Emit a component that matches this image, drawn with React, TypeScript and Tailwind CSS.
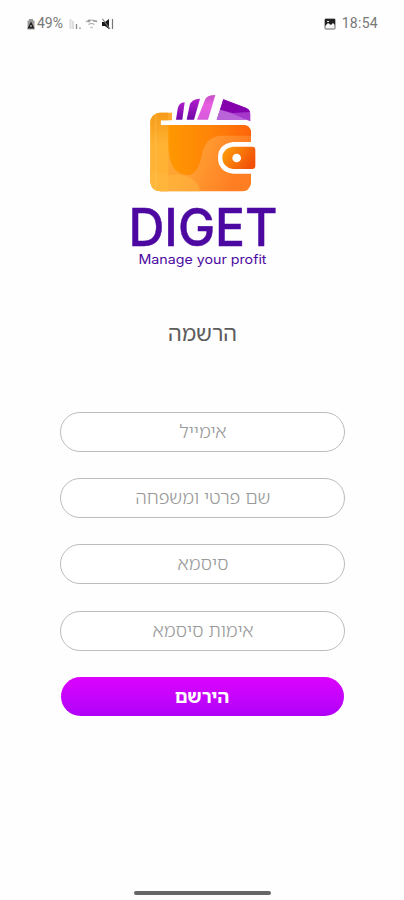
const fields = [
  { name: "email", type: "email", label: "אימייל" },
  { name: "fullName", type: "text", label: "שם פרטי ומשפחה" },
  { name: "password", type: "password", label: "סיסמא" },
  { name: "confirmPassword", type: "password", label: "אימות סיסמא" },
];

function StatusBar() {
  return (
    <header className="flex h-[47px] items-center justify-between px-[26px] font-[Roboto,sans-serif] text-[14px] text-[#777]">
      <div className="flex items-center">
        <svg className="h-3 w-[10px]" viewBox="0 0 10 12">
          <path d="M3 1h4v1.500h1.500V11.500H1.500V2.500H3z" fill="#999" />
          <path d="M5 3.500L8.500 10.500H1.500z" fill="#222" />
          <path d="M4 8h2" stroke="#ddd" strokeWidth="1" />
        </svg>
        <span className="ml-px w-[27px] whitespace-nowrap">49%</span>
        <svg className="ml-[5px] h-3 w-[13px]" viewBox="0 0 13 12">
          <path d="M1.500 1v10M4 3v8" stroke="#ddd" strokeWidth="2" />
          <path d="M7.500 6v5M11 9.500V11" stroke="#888" strokeWidth="1.300" />
        </svg>
        <svg className="ml-[3px] h-3 w-[13px]" viewBox="0 0 13 12" fill="none">
          <path d="M1 4q5-4 11 0M3.500 6.500q3-2 6 0" stroke="#aaa" strokeWidth="1.200" />
          <path d="M4 1.500v3M2.500 3h3M8 3h4" stroke="#888" strokeWidth="1" />
          <path d="M5 9.500h3" stroke="#ccc" strokeWidth="1.500" />
        </svg>
        <svg className="ml-[3px] h-3 w-[13px]" viewBox="0 0 13 12">
          <path d="M1 4h3l4-3v10L4 8H1z" fill="#1a1a1a" />
          <path d="M1.500 1l7.500 10M11.500 1v10" stroke="#777" strokeWidth="1.200" />
        </svg>
      </div>
      <div className="flex items-center">
        <svg className="mr-[6px] h-3 w-3" viewBox="0 0 12 12">
          <rect x="1" y="1" width="10" height="10" rx=".5" fill="#f4f4f4" stroke="#666" />
          <path d="M1 1h10v6L9 5 7 7 4 5 1 8z" fill="#222" />
          <path d="M3 3.500h2" stroke="#eee" />
        </svg>
        <span className="tracking-[0.3px]">18:54</span>
      </div>
    </header>
  );
}

function Wallet() {
  return (
    <svg className="ml-1.5 h-[115px] w-[130px]" viewBox="0 0 390 345">
      <defs>
        <linearGradient id="body" x1="0" y1="0" x2="1" y2=".3">
          <stop offset="0" stopColor="#ffae2c" />
          <stop offset=".5" stopColor="#ffa234" />
          <stop offset="1" stopColor="#ff7e22" />
        </linearGradient>
        <linearGradient id="pocket" x1="0" y1="0" x2="1" y2="0">
          <stop offset="0" stopColor="#ff9800" />
          <stop offset=".5" stopColor="#ff8408" />
          <stop offset="1" stopColor="#ff640a" />
        </linearGradient>
        <linearGradient id="base" x1="0" y1="0" x2="1" y2="0">
          <stop offset="0" stopColor="#ffb93c" />
          <stop offset="1" stopColor="#ffac3c" />
        </linearGradient>
        <linearGradient id="edge" x1="0" y1="0" x2="0" y2="1">
          <stop offset="0" stopColor="#f59a18" />
          <stop offset=".4" stopColor="#ffb232" />
          <stop offset="1" stopColor="#ffb236" />
        </linearGradient>
        <linearGradient id="clasp" x1="0" y1="0" x2="1" y2=".5">
          <stop offset="0" stopColor="#ffa50a" />
          <stop offset="1" stopColor="#f25208" />
        </linearGradient>
        <linearGradient id="note" x1="0" y1="0" x2="0" y2="1">
          <stop offset="0" stopColor="#b21ccb" />
          <stop offset="1" stopColor="#7108a8" />
        </linearGradient>
        <linearGradient id="pinkNote" x1="0" y1="0" x2="0" y2="1">
          <stop offset="0" stopColor="#c64fc5" />
          <stop offset=".4" stopColor="#e85ee0" />
          <stop offset="1" stopColor="#d65adb" />
        </linearGradient>
      </defs>
      {/* banknotes */}
      <path d="M108 104L113 72q3-19 21-20L127 104z" fill="url(#note)" />
      <path d="M140 104L149 61q6-20 31-20L162 104z" fill="url(#note)" />
      <path d="M171 104L196 42q6-12 30-12L204 104z" fill="url(#pinkNote)" />
      <path d="M230 104L250 43 319 69q12 5 12 19v21L320 104z" fill="#a438ca" />
      <path d="M250 43L319 69q9 4 11 12l-52 3-38-10z" fill="#8500ad" />
      <path d="M230 104L240 74 278 86 331 109 320 104z" fill="#b964d8" />
      {/* wallet body */}
      <path
        d="M59 83H96V106H62V120H311q17 0 22 18V171H279Q234 177 234 218t45 48H333V296q-5 23-29 23H61q-27-1-30-28V111q2-24 28-28z"
        fill="url(#body)"
      />
      <path d="M59 83H85V106H62V120H85V319H61q-27-1-30-28V111q2-24 28-28z" fill="url(#edge)" />
      <path d="M85 120H311q17 0 22 18V152H240Q198 157 187 203 175 270 142 270 85 270 85 175z" fill="url(#pocket)" />
      <path d="M31 256Q65 273 110 269 170 270 181 319H61q-27-1-30-28z" fill="url(#base)" opacity=".75" />
      <path d="M47 87V317" stroke="#ffcb62" strokeWidth="4" opacity=".3" />
      {/* clasp */}
      <path d="M279 185H337q9 0 9 9v49q0 9-9 9H279Q247 246 247 218t32-33z" fill="url(#clasp)" />
      <circle cx="290" cy="219" r="13" fill="#fff" />
    </svg>
  );
}

export default function App() {
  return (
    <main className="flex h-[900px] w-[404px] flex-col bg-[#fefefe] font-['Noto_Sans_Hebrew','Open_Sans',sans-serif]">
      <StatusBar />
      <div className="mt-[38px] flex flex-col items-center text-[#4c08a0]">
        <Wallet />
        <svg className="h-[75px] w-[160px] overflow-visible font-[Inter,sans-serif]" viewBox="0 0 160 75">
          <text x="6.500" y="45.500" fontSize="52" fontWeight="500" fill="currentColor" stroke="currentColor" strokeWidth=".5" textLength="149" lengthAdjust="spacingAndGlyphs">
            DIGET
          </text>
          <text x="16.500" y="64" fontSize="12.800" fill="currentColor" textLength="128" lengthAdjust="spacingAndGlyphs">
            Manage your profit
          </text>
        </svg>
      </div>
      <h1 dir="rtl" className="mt-[42px] pl-px text-center text-[21.8px] leading-8 font-normal text-[#5c5c5c]">
        הרשמה
      </h1>
      <form dir="rtl" className="mx-auto mt-[63px] flex w-[285px] flex-col gap-[26.200px]">
        {fields.map((field) => (
          <input
            key={field.name}
            type={field.type}
            name={field.name}
            placeholder={field.label}
            className="h-10 w-full rounded-full border border-[#bcbcbc] bg-white pr-5 pb-[3px] pl-[22px] text-center text-[18.3px] font-light outline-none placeholder:text-[#999]"
          />
        ))}
        <button
          type="button"
          className="mx-auto h-[39px] w-[283px] rounded-full bg-linear-to-b from-[#dc00ff] to-[#b000f8] text-[18.3px] leading-none font-bold text-white"
        >
          הירשם
        </button>
      </form>
      <div className="mx-auto mt-auto mb-[5px] h-1 w-[137px] rounded-full bg-[#666]" />
    </main>
  );
}
